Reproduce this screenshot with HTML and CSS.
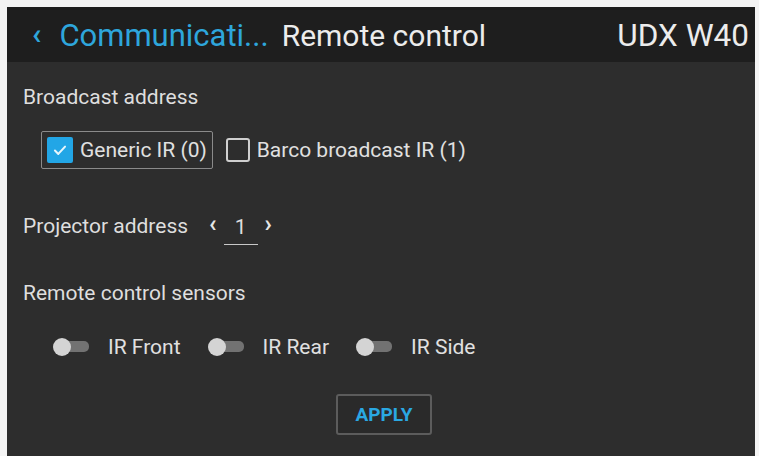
FILE: index.html
```html
<!DOCTYPE html>
<html>
<head>
<meta charset="utf-8">
<link rel="stylesheet" href="styles.css">
</head>
<body>
<div class="panel">
  <header class="header">
    <div class="back"><span class="chev">&lsaquo;</span><span class="crumb">Communicati...</span></div>
    <div class="title">Remote control</div>
    <div class="model">UDX W40</div>
  </header>
  <main class="content">
    <div class="label">Broadcast address</div>
    <div class="checks">
      <div class="check focused">
        <span class="box on"><svg width="18" height="18" viewBox="0 0 16 16"><path d="M3.5 8.5l3 3 6-6.5" fill="none" stroke="#e8f6fc" stroke-width="1.8" stroke-linecap="round" stroke-linejoin="round"/></svg></span>
        <span class="ctext">Generic IR (0)</span>
      </div>
      <div class="check">
        <span class="box"></span>
        <span class="ctext">Barco broadcast IR (1)</span>
      </div>
    </div>
    <div class="addr">
      <span class="label">Projector address</span>
      <span class="spin">
        <span class="arrow">&lsaquo;</span>
        <span class="value">1</span>
        <span class="arrow">&rsaquo;</span>
      </span>
    </div>
    <div class="label sensors">Remote control sensors</div>
    <div class="toggles">
      <div class="tog"><span class="switch"><span class="knob"></span></span><span class="ttext">IR Front</span></div>
      <div class="tog"><span class="switch"><span class="knob"></span></span><span class="ttext">IR Rear</span></div>
      <div class="tog"><span class="switch"><span class="knob"></span></span><span class="ttext">IR Side</span></div>
    </div>
    <div class="actions"><button class="apply">APPLY</button></div>
  </main>
</div>
</body>
</html>
```
FILE: styles.css
```css
html, body { margin: 0; padding: 0; background: #f4f4f4; }
body { padding: 7px 4px 0 7px; height: 456px; box-sizing: border-box; font-family: Roboto, "Liberation Sans", sans-serif; }
.panel { background: #2d2d2d; height: 449px; display: flex; flex-direction: column; }
.header { background: #1e1e1e; height: 55px; display: flex; align-items: center; padding: 2px 6px 0 25px; box-sizing: border-box; }
.back { display: flex; align-items: center; color: #2ea6dc; font-size: 31px; }
.chev { font-size: 30px; font-weight: bold; margin-right: 18px; position: relative; top: -2px; }
.title { color: #ececec; font-size: 30px; margin-left: 13px; }
.model { color: #ececec; font-size: 31.5px; margin-left: auto; }
.content { padding: 23px 16px 0 16px; color: #dedede; font-size: 21px; display: flex; flex-direction: column; }
.label { color: #dedede; font-size: 21px; }
.checks { display: flex; align-items: center; margin-top: 22px; margin-left: 18px; gap: 13px; }
.check { display: flex; align-items: center; height: 38px; gap: 7px; box-sizing: border-box; }
.check.focused { border: 1px solid #8a8a8a; border-radius: 2px; padding: 0 5px; }
.box { width: 24px; height: 24px; border: 2px solid #cfcfcf; border-radius: 3px; display: flex; align-items: center; justify-content: center; box-sizing: border-box; }
.box.on { width: 26px; height: 26px; background: #22a6e6; border-color: #22a6e6; border-radius: 2px; }
.ctext { font-size: 21px; color: #e0e0e0; }
.addr { display: flex; align-items: center; margin-top: 42px; height: 30px; }
.spin { display: flex; align-items: center; margin-left: 21px; }
.arrow { font-size: 24px; font-weight: bold; color: #e6e6e6; position: relative; top: -2px; }
.value { width: 34px; text-align: center; margin: 0 7px; padding-bottom: 5px; border-bottom: 1px solid #c8c8c8; position: relative; top: 4px; font-size: 21px; }
.sensors { margin-top: 40px; }
.toggles { display: flex; align-items: center; margin-top: 30px; margin-left: 30px; gap: 27px; }
.tog { display: flex; align-items: center; gap: 19px; }
.switch { width: 36px; height: 18px; position: relative; display: block; }
.switch::before { content: ""; position: absolute; left: 6px; right: 0; top: 3px; height: 11px; background: #727272; border-radius: 5px; }
.knob { position: absolute; left: 0; top: 0; width: 18px; height: 18px; border-radius: 50%; background: #d4d4d4; }
.ttext { font-size: 21px; color: #e0e0e0; }
.actions { display: flex; justify-content: center; margin-top: 35px; }
.apply { width: 96px; height: 41px; background: #2a2a2a; border: 2px solid #5c5c5c; border-radius: 3px; color: #2aa8e2; font-family: Roboto, "Liberation Sans", sans-serif; font-weight: bold; font-size: 19px; margin-left: 6px; padding: 0; }
```
